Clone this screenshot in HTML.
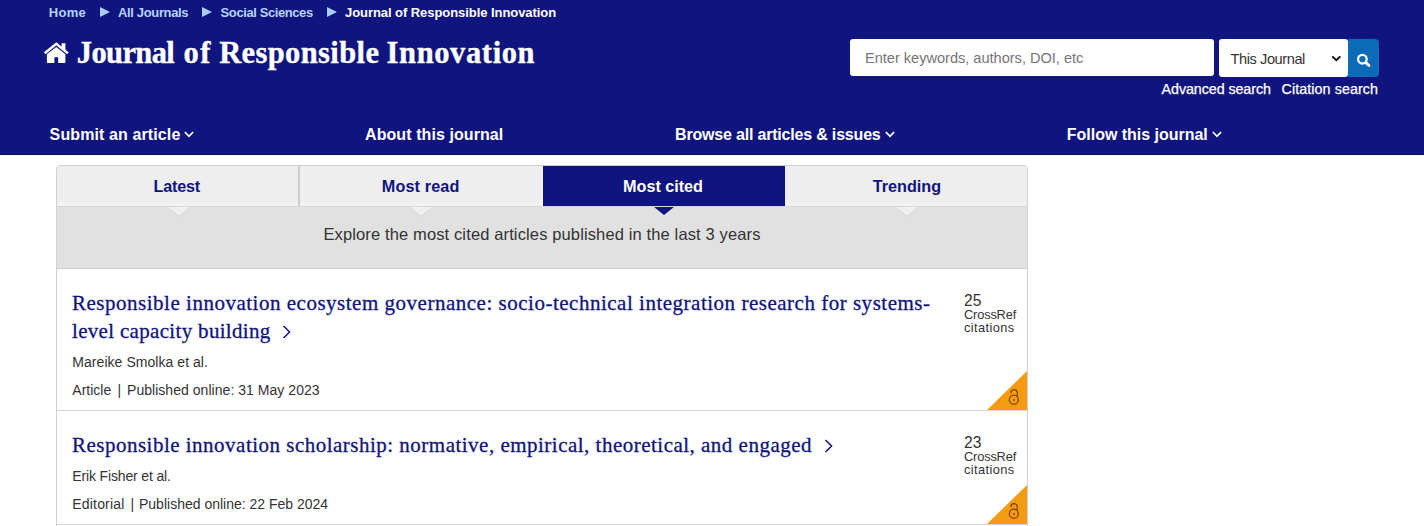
<!DOCTYPE html>
<html><head><meta charset="utf-8"><title>Journal of Responsible Innovation</title>
<style>
*{box-sizing:border-box;margin:0;padding:0}
html,body{width:1424px;height:526px;overflow:hidden;background:#fff}
body{font-family:"Liberation Sans",sans-serif;color:#333;position:relative}
.hdr{position:absolute;left:0;top:0;width:1424px;height:155px;background:#10147e;border-bottom:1px solid #0a0c55}
.abs{position:absolute;white-space:nowrap}
.bc{top:4.8px;font-size:13px;font-weight:bold;color:#b5d5ff;line-height:16px}
.bc.cur{color:#fff}
.tri{position:absolute;top:6.75px;width:0;height:0;border-left:10px solid #a9cdf5;border-top:5.25px solid transparent;border-bottom:5.25px solid transparent}
.title span{position:absolute;top:0;left:0}
.title{left:0;top:33.35px;-webkit-text-stroke:0.35px #fff;font-family:"Liberation Serif",serif;font-weight:bold;font-size:30.5px;color:#fff;line-height:40px}
.nav{top:125.1px;font-size:16px;font-weight:bold;color:#fff;line-height:20px}
.chev{position:absolute;top:131.2px}
.search{position:absolute;left:850px;top:39px;width:364px;height:37px;background:#fff;border-radius:3px}
.search span{position:absolute;left:15px;top:10.1px;font-size:14.6px;color:#757575;line-height:18px}
.sel{position:absolute;left:1219px;top:39px;width:129px;height:38px;background:#fff;border-radius:3px}
.sel span{position:absolute;left:11.6px;top:11px;font-size:14.6px;color:#333;line-height:18px}
.btn{position:absolute;left:1348px;top:39px;width:31px;height:38px;background:#0b6bb8;border-radius:0 4px 4px 0}
.lnk{top:79.5px;font-size:14.3px;color:#fff;line-height:18px;-webkit-text-stroke:0.25px #fff}
.box{position:absolute;left:56px;top:165px;width:972px;height:370px;border:1px solid #d0d0d0;border-radius:4px 4px 0 0;background:#fff;overflow:hidden}
.tabs{position:absolute;left:0;top:0;width:970px;height:41px;background:linear-gradient(#eee 0,#eee 34px,#f3f3f3 39px,#f1f1f1 40px);border-bottom:1px solid #d6d6d6}
.tab{position:absolute;top:0;height:40px;width:242.5px;font-weight:bold;font-size:16.2px;line-height:20px;color:#10147e}
.tab span{position:absolute;top:10px;white-space:nowrap}
.tab.on{background:#10147e;color:#fff}
.div{position:absolute;top:0;width:2px;height:40px;background:#cdcdcd}
.sub{position:absolute;left:0;top:41px;width:970px;height:62px;background:#e1e1e1;border-bottom:1px solid #d0d0d0}
.sub span{top:16px;font-size:16.5px;line-height:22px;color:#333}
.not{position:absolute;top:40.5px;width:0;height:0;border-left:11px solid transparent;border-right:11px solid transparent;border-top:9px solid #f0f0f0;margin-left:-1px}
.notb{position:absolute;top:40.5px;width:0;height:0;border-left:12px solid transparent;border-right:12px solid transparent;border-top:10px solid #d4d4d4;margin-left:-1px}
.not.on{border-top-color:#10147e;border-left-width:10px;border-right-width:10px;border-top-width:8.5px;margin-left:0}
.at{font-family:"Liberation Serif",serif;font-size:21px;line-height:28px;color:#10147e;left:15px;-webkit-text-stroke:0.3px #10147e}
.meta{font-size:14px;line-height:18px;color:#333;left:15.3px}
.hr{position:absolute;left:0;width:970px;height:1px;background:#d6d6d6}
.num{font-size:15.6px;line-height:18px;color:#333;left:907px}
.cr{font-size:12.8px;line-height:13px;color:#333;left:907px}
.oa{position:absolute;left:930px}
.arr{position:absolute}
/*LS*/
#bc1{letter-spacing:0.310px}
#bc2{letter-spacing:-0.350px}
#bc3{letter-spacing:-0.410px}
#bc4{letter-spacing:-0.060px}
#tw1{letter-spacing:-0.610px}
#tw3{letter-spacing:0.380px}
#tw4{letter-spacing:0.620px}
#ph{letter-spacing:-0.020px}
#selt{letter-spacing:-0.430px}
#adv{letter-spacing:-0.080px}
#cit{letter-spacing:0.080px}
#n1{letter-spacing:0.110px}
#n2{letter-spacing:0.080px}
#n3{letter-spacing:-0.190px}
#n4{letter-spacing:-0.020px}
#t1{letter-spacing:-0.200px}
#t2{letter-spacing:0.140px}
#t3{letter-spacing:-0.020px}
#t4{letter-spacing:0.000px}
#subt{letter-spacing:0.130px}
#a1l1{letter-spacing:0.510px}
#a1l2{letter-spacing:0.320px}
#a1au{letter-spacing:0.050px}
#a1m1{letter-spacing:0.000px}
#a1m3{letter-spacing:0.040px}
#a2l1{letter-spacing:0.490px}
#a2au{letter-spacing:-0.150px}
#a2m1{letter-spacing:0.180px}
#a2m3{letter-spacing:0.000px}
#c1n{letter-spacing:-0.000px}
#c1a{letter-spacing:-0.160px}
#c1b{letter-spacing:0.390px}
#c2n{letter-spacing:-0.000px}
#c2a{letter-spacing:-0.160px}
#c2b{letter-spacing:0.390px}
/*ENDLS*/
</style></head><body>
<div class="hdr">
 <span id="bc1" class="abs bc" style="left:48.7px">Home</span><i class="tri" style="left:99.6px"></i>
 <span id="bc2" class="abs bc" style="left:118px">All Journals</span><i class="tri" style="left:201.8px"></i>
 <span id="bc3" class="abs bc" style="left:220.6px">Social Sciences</span><i class="tri" style="left:326.8px"></i>
 <span id="bc4" class="abs bc cur" style="left:345px">Journal of Responsible Innovation</span>
 <svg class="abs" style="left:43px;top:42px" width="27" height="22" viewBox="0 0 27 22"><path d="M1.7 11.3 L13.3 1.9 L24.9 11.3" fill="none" stroke="#fff" stroke-width="2.5" stroke-linejoin="miter"/><path fill="#fff" d="M18.6 1.2 H22.4 V9.3 L18.6 6.2 Z M3.9 12.3 L13.3 5.1 L22.4 12.3 V20.3 a.8.8 0 0 1 -.8.8 H15.2 V15.3 H11.4 V21.1 H4.7 a.8.8 0 0 1 -.8-.8 Z"/></svg>
 <span class="abs title"><span id="tw1" style="left:76.8px">Journal</span> <span id="tw2" style="left:183.5px;letter-spacing:1.6px">of</span> <span id="tw3" style="left:219.2px">Responsible</span> <span id="tw4" style="left:386.6px">Innovation</span></span>
 <div class="search"><span id="ph" class="abs">Enter keywords, authors, DOI, etc</span></div>
 <div class="sel"><span id="selt" class="abs">This Journal</span>
  <svg style="position:absolute;left:112px;top:15.5px" width="11" height="8" viewBox="0 0 11 8"><path d="M1.2 1.4 L5.3 5.3 L9.4 1.4" fill="none" stroke="#111" stroke-width="1.9"/></svg></div>
 <div class="btn"><svg style="position:absolute;left:7.5px;top:14.1px" width="16" height="15" viewBox="0 0 16 15"><circle cx="6.4" cy="6.2" r="4.3" fill="none" stroke="#fff" stroke-width="2.3"/><path d="M9.8 9.6 L13.0 12.5" stroke="#fff" stroke-width="2.8" stroke-linecap="round"/></svg></div>
 <span id="adv" class="abs lnk" style="left:1161.6px">Advanced search</span>
 <span id="cit" class="abs lnk" style="left:1281.5px">Citation search</span>
 <span id="n1" class="abs nav" style="left:49.6px">Submit an article</span>
 <svg class="chev" style="left:184px" width="10" height="7" viewBox="0 0 10 7"><path d="M0.9 1 L5 5.3 L9.1 1" fill="none" stroke="#fff" stroke-width="1.8"/></svg>
 <span id="n2" class="abs nav" style="left:365px">About this journal</span>
 <span id="n3" class="abs nav" style="left:675.1px">Browse all articles &amp; issues</span>
 <svg class="chev" style="left:885.3px" width="10" height="7" viewBox="0 0 10 7"><path d="M0.9 1 L5 5.3 L9.1 1" fill="none" stroke="#fff" stroke-width="1.8"/></svg>
 <span id="n4" class="abs nav" style="left:1066.8px">Follow this journal</span>
 <svg class="chev" style="left:1211.7px" width="10" height="7" viewBox="0 0 10 7"><path d="M0.9 1 L5 5.3 L9.1 1" fill="none" stroke="#fff" stroke-width="1.8"/></svg>
</div>
<div class="box">
 <div class="tabs">
  <div class="tab" style="left:0"><span id="t1" style="left:96.5px">Latest</span></div>
  <div class="tab" style="left:242.5px"><span id="t2" style="left:82.3px">Most read</span></div>
  <div class="tab on" style="left:486px;width:241.5px"><span id="t3" style="left:80.1px">Most cited</span></div>
  <div class="tab" style="left:727.5px"><span id="t4" style="left:88.3px">Trending</span></div>
  <i class="div" style="left:241px"></i><i class="div" style="left:484px;background:#f4f4f4"></i>
 </div>
 <div class="sub"><span id="subt" class="abs" style="left:266.4px">Explore the most cited articles published in the last 3 years</span></div>
 <i class="notb" style="left:110.5px"></i><i class="notb" style="left:353px"></i><i class="notb" style="left:839px"></i><i class="not" style="left:111.5px"></i><i class="not" style="left:354px"></i><i class="not on" style="left:597px"></i><i class="not" style="left:840px"></i>
 <span id="a1l1" class="abs at" style="top:123px">Responsible innovation ecosystem governance: socio-technical integration research for systems-</span>
 <span id="a1l2" class="abs at" style="top:151px">level capacity building</span>
 <svg class="arr" style="left:225px;top:159px" width="10" height="14" viewBox="0 0 10 14"><path d="M1.5 1 L7.6 7 L1.5 13" fill="none" stroke="#10147e" stroke-width="1.5"/></svg>
 <span id="a1au" class="abs meta" style="top:187px">Mareike Smolka et al.</span>
 <span id="a1m1" class="abs meta" style="top:215px">Article</span><span id="a1m2" class="abs meta" style="top:215px;left:60.6px">|</span><span id="a1m3" class="abs meta" style="top:215px;left:70px">Published online: 31 May 2023</span>
 <span id="c1n" class="abs num" style="top:126px">25</span>
 <span id="c1a" class="abs cr" style="top:141.8px">CrossRef</span><span id="c1b" class="abs cr" style="top:154.8px">citations</span>
 <svg class="oa" style="top:204px" width="41" height="40" viewBox="0 0 41 40"><path d="M0 40 L41 0 V40 Z" fill="#f39c12"/><g fill="none" stroke="#7d4204" stroke-width="1.25"><circle cx="26.85" cy="29.7" r="4.5"/><path d="M24 23.2 V22.6 a3.1 3.1 0 0 1 6.2 0 V26.6"/></g><circle cx="26.9" cy="30" r="1.05" fill="#8a4a06"/></svg>
 <div class="hr" style="top:244px"></div>
 <span id="a2l1" class="abs at" style="top:265px">Responsible innovation scholarship: normative, empirical, theoretical, and engaged</span>
 <svg class="arr" style="left:767px;top:272.5px" width="10" height="14" viewBox="0 0 10 14"><path d="M1.5 1 L7.6 7 L1.5 13" fill="none" stroke="#10147e" stroke-width="1.5"/></svg>
 <span id="a2au" class="abs meta" style="top:301px">Erik Fisher et al.</span>
 <span id="a2m1" class="abs meta" style="top:329px">Editorial</span><span id="a2m2" class="abs meta" style="top:329px;left:73.4px">|</span><span id="a2m3" class="abs meta" style="top:329px;left:82px">Published online: 22 Feb 2024</span>
 <span id="c2n" class="abs num" style="top:268px">23</span>
 <span id="c2a" class="abs cr" style="top:283.8px">CrossRef</span><span id="c2b" class="abs cr" style="top:296.8px">citations</span>
 <svg class="oa" style="top:318px" width="41" height="40" viewBox="0 0 41 40"><path d="M0 40 L41 0 V40 Z" fill="#f39c12"/><g fill="none" stroke="#7d4204" stroke-width="1.25"><circle cx="26.85" cy="29.7" r="4.5"/><path d="M24 23.2 V22.6 a3.1 3.1 0 0 1 6.2 0 V26.6"/></g><circle cx="26.9" cy="30" r="1.05" fill="#8a4a06"/></svg>
 <div class="hr" style="top:358px"></div>
</div>
</body></html>
